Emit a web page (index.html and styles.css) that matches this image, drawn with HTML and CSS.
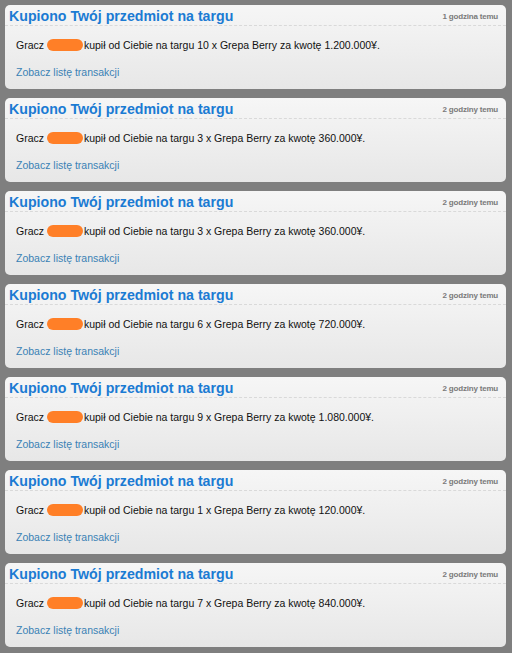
FILE: index.html
```html
<!DOCTYPE html>
<html lang="pl">
<head>
<meta charset="utf-8">
<link rel="stylesheet" href="styles.css">
</head>
<body>
<div class="list">
  <div class="card">
    <div class="head"><span class="title">Kupiono Twój przedmiot na targu</span><span class="time">1 godzina temu</span></div>
    <div class="body">
      <p class="msg">Gracz <span class="blob"></span>kupił od Ciebie na targu 10 x Grepa Berry za kwotę 1.200.000¥.</p>
      <a class="link" href="#">Zobacz listę transakcji</a>
    </div>
  </div>
  <div class="card">
    <div class="head"><span class="title">Kupiono Twój przedmiot na targu</span><span class="time">2 godziny temu</span></div>
    <div class="body">
      <p class="msg">Gracz <span class="blob"></span>kupił od Ciebie na targu 3 x Grepa Berry za kwotę 360.000¥.</p>
      <a class="link" href="#">Zobacz listę transakcji</a>
    </div>
  </div>
  <div class="card">
    <div class="head"><span class="title">Kupiono Twój przedmiot na targu</span><span class="time">2 godziny temu</span></div>
    <div class="body">
      <p class="msg">Gracz <span class="blob"></span>kupił od Ciebie na targu 3 x Grepa Berry za kwotę 360.000¥.</p>
      <a class="link" href="#">Zobacz listę transakcji</a>
    </div>
  </div>
  <div class="card">
    <div class="head"><span class="title">Kupiono Twój przedmiot na targu</span><span class="time">2 godziny temu</span></div>
    <div class="body">
      <p class="msg">Gracz <span class="blob"></span>kupił od Ciebie na targu 6 x Grepa Berry za kwotę 720.000¥.</p>
      <a class="link" href="#">Zobacz listę transakcji</a>
    </div>
  </div>
  <div class="card">
    <div class="head"><span class="title">Kupiono Twój przedmiot na targu</span><span class="time">2 godziny temu</span></div>
    <div class="body">
      <p class="msg">Gracz <span class="blob"></span>kupił od Ciebie na targu 9 x Grepa Berry za kwotę 1.080.000¥.</p>
      <a class="link" href="#">Zobacz listę transakcji</a>
    </div>
  </div>
  <div class="card">
    <div class="head"><span class="title">Kupiono Twój przedmiot na targu</span><span class="time">2 godziny temu</span></div>
    <div class="body">
      <p class="msg">Gracz <span class="blob"></span>kupił od Ciebie na targu 1 x Grepa Berry za kwotę 120.000¥.</p>
      <a class="link" href="#">Zobacz listę transakcji</a>
    </div>
  </div>
  <div class="card">
    <div class="head"><span class="title">Kupiono Twój przedmiot na targu</span><span class="time">2 godziny temu</span></div>
    <div class="body">
      <p class="msg">Gracz <span class="blob"></span>kupił od Ciebie na targu 7 x Grepa Berry za kwotę 840.000¥.</p>
      <a class="link" href="#">Zobacz listę transakcji</a>
    </div>
  </div>
</div>
</body>
</html>
```
FILE: styles.css
```css
html, body {
  margin: 0;
  padding: 0;
  background: #7f7f7f;
}
body {
  font-family: "Liberation Sans", Arial, sans-serif;
}
.list {
  display: flex;
  flex-direction: column;
  gap: 9px;
  padding: 5px 6px 0 5px;
}
.card {
  height: 84px;
  box-sizing: border-box;
  border-radius: 5px;
  background: linear-gradient(#f6f6f6, #e7e7e7);
}
.head {
  height: 21px;
  box-sizing: border-box;
  display: flex;
  justify-content: space-between;
  align-items: center;
  padding: 2px 8px 0 4px;
  border-bottom: 1px dashed #d9d9d9;
}
.title {
  color: #1b7bd3;
  font-weight: bold;
  font-size: 14.2px;
}
.time {
  color: #7a7a7a;
  font-weight: bold;
  font-size: 8px;
  letter-spacing: -0.2px;
}
.body {
  padding: 12px 0 0 11px;
}
.msg {
  margin: 0;
  font-size: 10.5px;
  color: #111;
  line-height: 14px;
  display: flex;
  align-items: center;
  white-space: pre;
}
.blob {
  display: inline-block;
  width: 36px;
  height: 12px;
  border-radius: 6px;
  background: #ff7f27;
  margin-right: 1px;
}
.link {
  display: block;
  margin-top: 13px;
  font-size: 10.5px;
  line-height: 14px;
  color: #3a82b5;
  text-decoration: none;
}
```
